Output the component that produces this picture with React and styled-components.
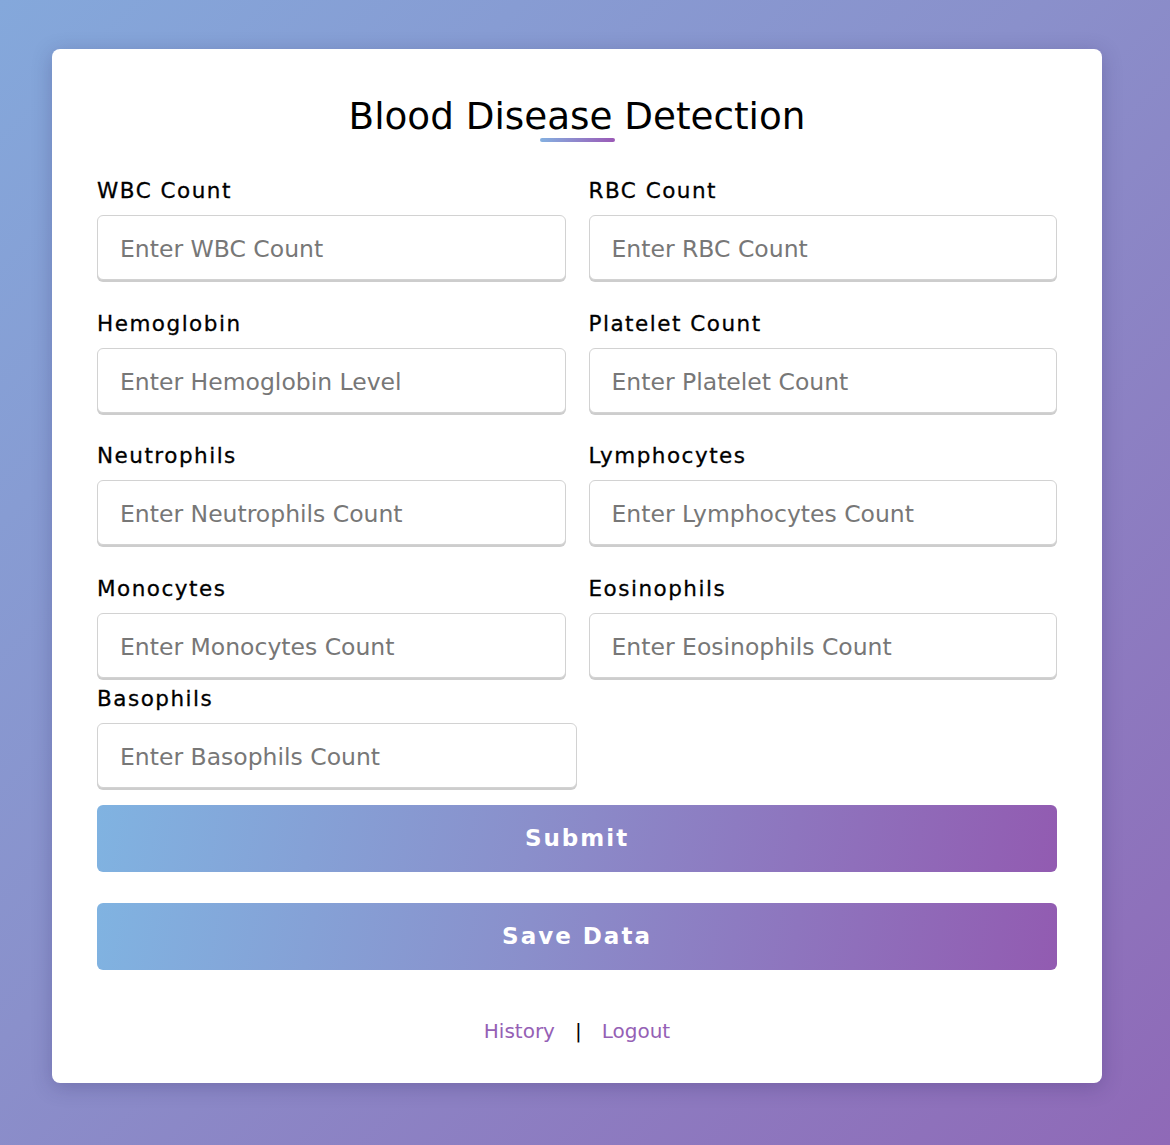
import React, { useState } from 'react'
import styled, { createGlobalStyle } from 'styled-components'

const GlobalStyle = createGlobalStyle`
  * {
    box-sizing: border-box;
  }

  body {
    margin: 0;
    min-height: 100vh;
    font-family: 'DejaVu Sans', 'Noto Sans', Arial, sans-serif;
    background: linear-gradient(135deg, #84a8db 0%, #8a90cb 45%, #8f69b7 100%);
  }
`

const Page = styled.div`
  display: flex;
  justify-content: center;
  padding: 49px 16px 62px 0;
`

const Card = styled.div`
  width: 1050px;
  padding: 45px 45px 40px;
  background: #fff;
  border-radius: 8px;
  box-shadow: 0 4px 20px rgba(40, 30, 90, 0.25);
`

const Title = styled.h2`
  display: flex;
  flex-direction: column;
  align-items: center;
  margin: 0 0 36px;
  padding-top: 2px;
  font-size: 37.3px;
  line-height: 40px;
  font-weight: 400;
  color: #000;

  &::after {
    content: '';
    width: 75px;
    height: 4px;
    margin-top: 2px;
    border-radius: 2px;
    background: linear-gradient(to right, #84b0e0, #9b59b6);
  }
`

const Grid = styled.div`
  display: grid;
  grid-template-columns: 1fr 1fr;
  column-gap: 23px;
  row-gap: 30.5px;
  margin-bottom: 8px;
`

const Group = styled.div`
  display: flex;
  flex-direction: column;
  width: ${({ half }) => (half ? '50%' : '100%')};
`

const Label = styled.label`
  margin-bottom: 13px;
  padding-top: 1px;
  height: 24px;
  font-size: 21.5px;
  line-height: 24px;
  font-weight: 400;
  letter-spacing: 1.5px;
  -webkit-text-stroke: 0.3px #000;
  color: #000;
`

const Input = styled.input`
  width: 100%;
  height: 65px;
  padding: 3px 22px 0;
  border: 1px solid #d2d2d2;
  border-radius: 6px;
  box-shadow: 0 2px 0 #cdcdcd;
  font-family: inherit;
  font-size: 23.5px;
  color: #222;
  outline: none;

  &::placeholder {
    color: #777;
  }
`

const Button = styled.button`
  display: block;
  width: 100%;
  height: 67px;
  margin-top: ${({ first }) => (first ? '17px' : '31px')};
  border: none;
  border-radius: 6px;
  background: linear-gradient(100deg, #80b3e1 0%, #8a8fcb 45%, #925bb1 100%);
  font-family: inherit;
  font-size: 23px;
  font-weight: 700;
  letter-spacing: 2px;
  color: #fff;
  cursor: pointer;
`

const Footer = styled.div`
  display: flex;
  justify-content: center;
  align-items: center;
  gap: 20px;
  margin-top: 49px;
  font-size: 20px;
  line-height: 24px;
`

const Link = styled.a`
  color: #9560b5;
  text-decoration: none;
  cursor: pointer;
`

const Separator = styled.span`
  color: #000;
`

const fields = [
  { name: 'wbc', label: 'WBC Count', placeholder: 'Enter WBC Count' },
  { name: 'rbc', label: 'RBC Count', placeholder: 'Enter RBC Count' },
  { name: 'hemoglobin', label: 'Hemoglobin', placeholder: 'Enter Hemoglobin Level' },
  { name: 'platelet', label: 'Platelet Count', placeholder: 'Enter Platelet Count' },
  { name: 'neutrophils', label: 'Neutrophils', placeholder: 'Enter Neutrophils Count' },
  { name: 'lymphocytes', label: 'Lymphocytes', placeholder: 'Enter Lymphocytes Count' },
  { name: 'monocytes', label: 'Monocytes', placeholder: 'Enter Monocytes Count' },
  { name: 'eosinophils', label: 'Eosinophils', placeholder: 'Enter Eosinophils Count' }
]

const App = () => {
  const [values, setValues] = useState({})

  const handleChange = (e) => {
    const { name, value } = e.target
    setValues((prev) => ({ ...prev, [name]: value }))
  }

  return (
    <Page>
      <GlobalStyle />
      <Card>
        <Title>Blood Disease Detection</Title>

        <form onSubmit={(e) => e.preventDefault()}>
          <Grid>
            {fields.map((f) => (
              <Group key={f.name}>
                <Label htmlFor={f.name}>{f.label}</Label>
                <Input
                  id={f.name}
                  name={f.name}
                  type={'number'}
                  placeholder={f.placeholder}
                  value={values[f.name] ?? ''}
                  onChange={handleChange}
                />
              </Group>
            ))}
          </Grid>

          <Group half>
            <Label htmlFor={'basophils'}>Basophils</Label>
            <Input
              id={'basophils'}
              name={'basophils'}
              type={'number'}
              placeholder={'Enter Basophils Count'}
              value={values.basophils ?? ''}
              onChange={handleChange}
            />
          </Group>

          <Button first type={'submit'}>
            Submit
          </Button>
          <Button type={'button'}>Save Data</Button>
        </form>

        <Footer>
          <Link>History</Link>
          <Separator>|</Separator>
          <Link>Logout</Link>
        </Footer>
      </Card>
    </Page>
  )
}

export default App
